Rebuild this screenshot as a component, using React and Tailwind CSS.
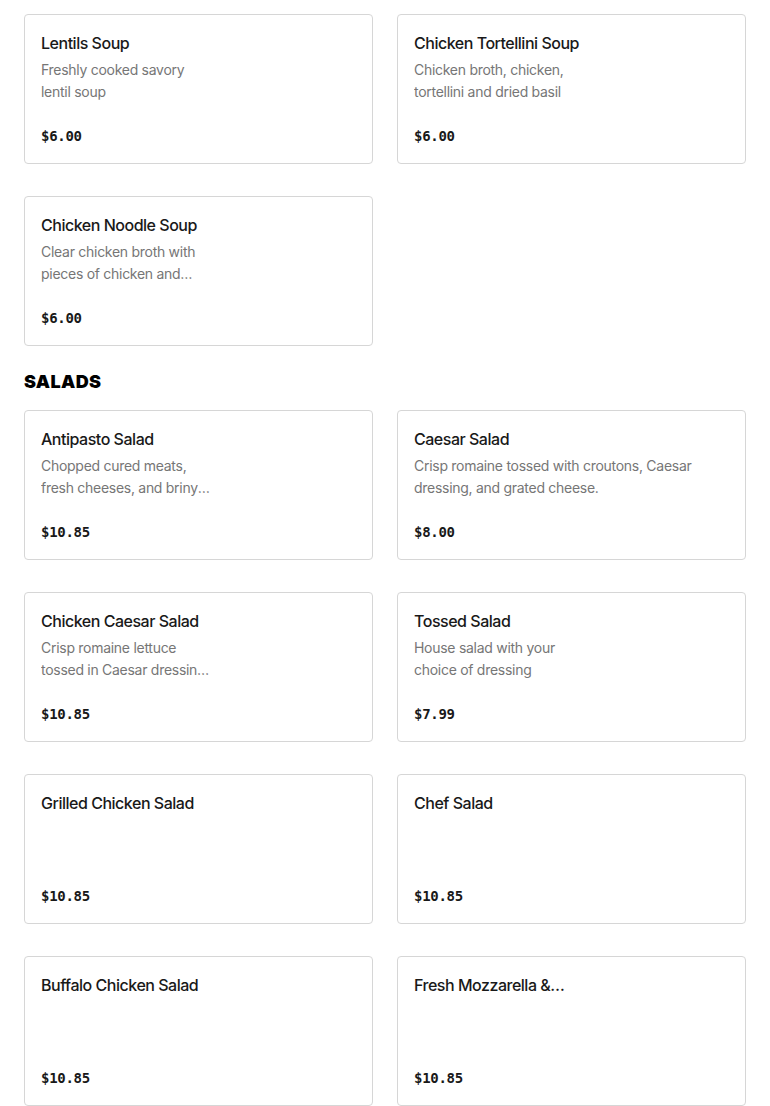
import React from 'react'

const soups = [
  { name: 'Lentils Soup', desc: 'Freshly cooked savory lentil soup', price: '$6.00', narrow: true },
  { name: 'Chicken Tortellini Soup', desc: 'Chicken broth, chicken, tortellini and dried basil', price: '$6.00', narrow: true },
  { name: 'Chicken Noodle Soup', desc: 'Clear chicken broth with pieces of chicken and noodles', price: '$6.00', narrow: true },
]

const salads = [
  { name: 'Antipasto Salad', desc: 'Chopped cured meats, fresh cheeses, and briny vegetables over crisp lettuce', price: '$10.85', narrow: true },
  { name: 'Caesar Salad', desc: 'Crisp romaine tossed with croutons, Caesar dressing, and grated cheese.', price: '$8.00' },
  { name: 'Chicken Caesar Salad', desc: 'Crisp romaine lettuce tossed in Caesar dressing with grilled chicken', price: '$10.85', narrow: true },
  { name: 'Tossed Salad', desc: 'House salad with your choice of dressing', price: '$7.99', narrow: true },
  { name: 'Grilled Chicken Salad', price: '$10.85' },
  { name: 'Chef Salad', price: '$10.85' },
  { name: 'Buffalo Chicken Salad', price: '$10.85' },
  { name: 'Fresh Mozzarella & Tomato Salad', price: '$10.85' },
]

const ItemCard = ({ item }) => (
  <div className="h-[150px] border border-[#d6d6d6] rounded-[4px] bg-white px-4 pt-4 pb-[17px] flex flex-col">
    <div className="text-[16px] leading-6 font-medium tracking-[-0.03em] text-[#191919] line-clamp-1 max-w-[172px]">{item.name}</div>
    {item.desc && (
      <div
        className={`mt-1 text-[14px] leading-[22px] tracking-[-0.02em] text-[#767676] line-clamp-2 ${item.narrow ? 'max-w-[172px]' : ''}`}
      >
        {item.desc}
      </div>
    )}
    <div className="mt-auto text-[14px] leading-5 font-bold text-[#191919] font-['DejaVu_Sans_Mono',monospace] tracking-[-0.02em]">
      {item.price}
    </div>
  </div>
)

export default function App() {
  return (
    <div className="min-h-screen bg-white px-6 pt-[14px] font-['Inter',sans-serif]">
      <div className="grid grid-cols-2 gap-x-6 gap-y-8">
        {soups.map(item => (
          <ItemCard key={item.name} item={item} />
        ))}
      </div>

      {/* Salads */}
      <h2 className="mt-6 mb-4 text-[18px] leading-6 font-black tracking-[0.02em] text-black">SALADS</h2>
      <div className="grid grid-cols-2 gap-x-6 gap-y-8">
        {salads.map(item => (
          <ItemCard key={item.name} item={item} />
        ))}
      </div>
    </div>
  )
}
